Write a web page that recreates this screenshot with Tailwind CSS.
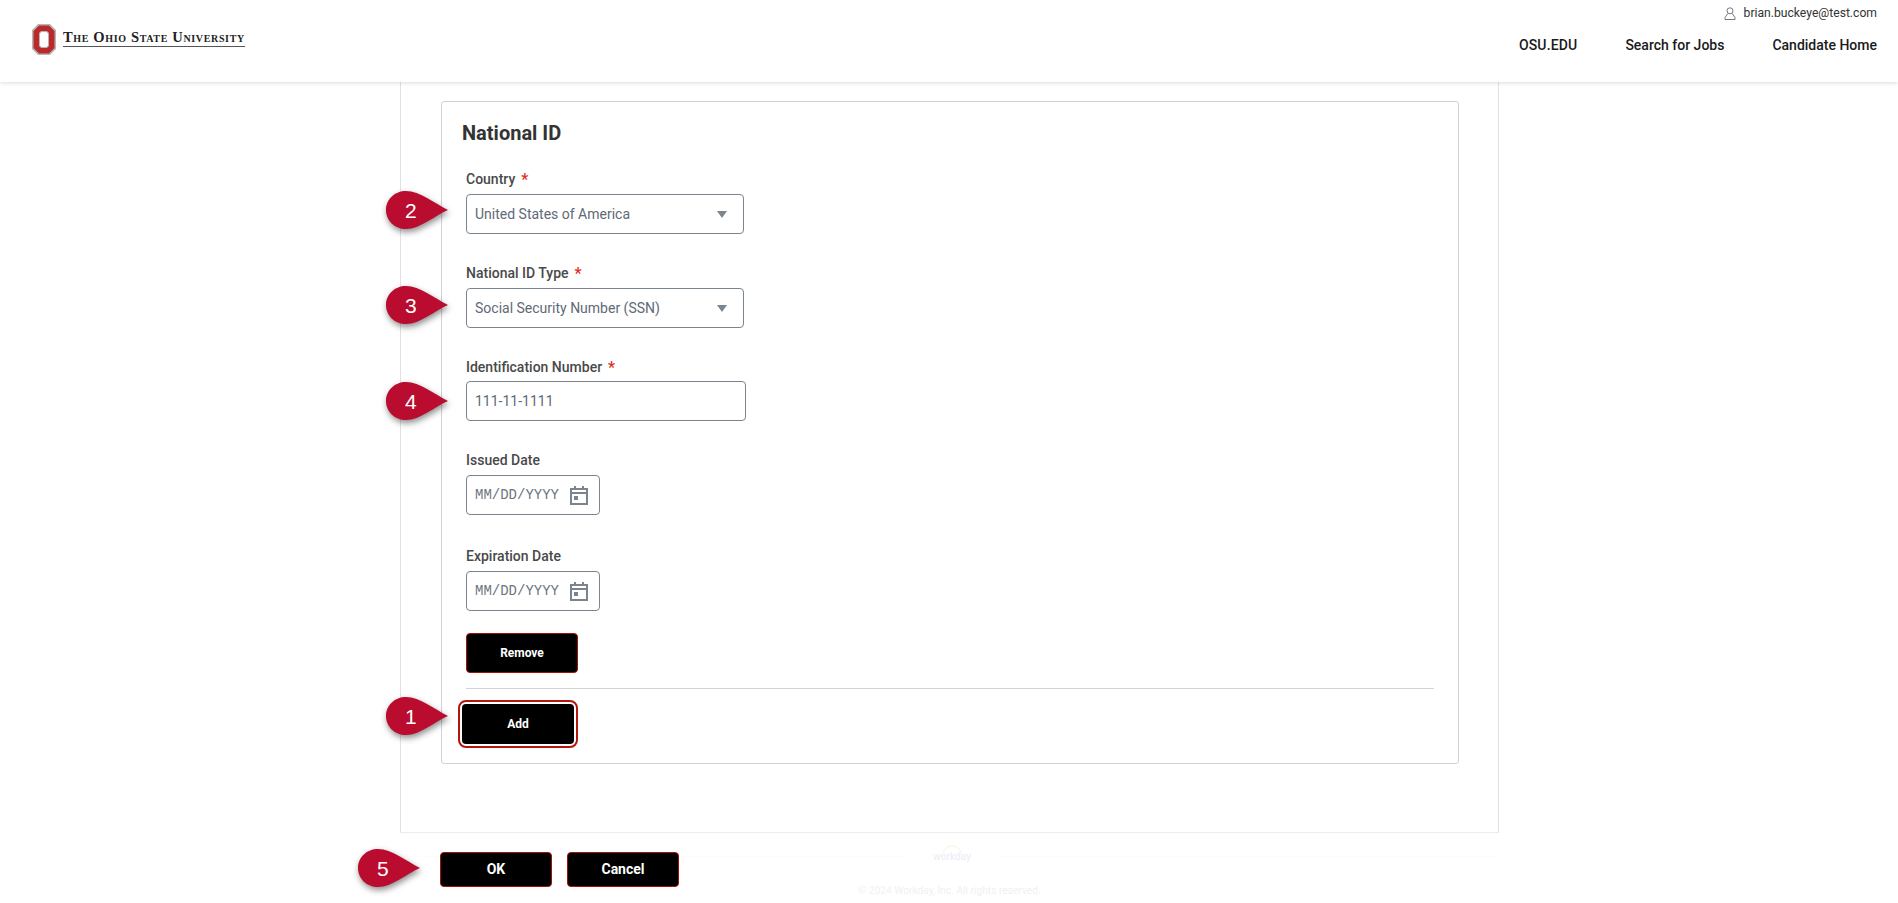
<!DOCTYPE html>
<html lang="en">

<head>
    <meta charset="UTF-8">
    <meta name="viewport" content="width=device-width, initial-scale=1">
    <title>National ID</title>
    <script src="https://cdn.jsdelivr.net/npm/@tailwindcss/browser@4"></script>
</head>

<body class="bg-white text-[#333] font-['Roboto',sans-serif] h-[903px] overflow-hidden">

    <!-- Header -->
    <header class="h-[82px] bg-white flex justify-between shadow-[0_1px_4px_rgba(0,0,0,0.14)] relative z-10">
        <div class="flex items-start pl-[32px] pt-[24px]">
            <svg width="24" height="31" viewBox="0 0 24 31">
                <path d="M6 0H18L24 6V25L18 31H6L0 25V6Z" fill="#b5b5b5" />
                <path d="M7 1.5H17L22.5 7V24L17 29.5H7L1.5 24V7Z" fill="#bb2a2a" />
                <path d="M9 7H15L17 9V22L15 24H9L7 22V9Z" fill="#b5b5b5" />
                <path d="M9.5 8H14.5L16 9.5V21.5L14.5 23H9.5L8 21.5V9.5Z" fill="#fff" />
            </svg>
            <div class="ml-[7px] mt-[3px] w-[182px] border-b border-[#555] h-[20px] font-['Liberation_Serif',serif] font-bold text-[14.5px] leading-[20px] [font-variant:small-caps] text-[#222] whitespace-nowrap tracking-[0.65px]">
                The Ohio State University</div>
        </div>
        <div class="flex flex-col items-end pr-[21px]">
            <div class="flex items-center h-[13px] mt-[7px] text-[12.15px] text-[#333]">
                <svg class="mr-[8px]" width="12" height="13" viewBox="0 0 12 13" fill="none" stroke="#777" stroke-width="1">
                    <circle cx="6" cy="3.8" r="3" />
                    <path d="M3.8 6.5 1 10.5V12.5H11V10.5L8.2 6.5" />
                </svg>
                brian.buckeye@test.com
            </div>
            <nav class="flex gap-[48px] mt-[15px] text-[14px] font-medium leading-[20px] text-[#1a1a1a]">
                <span class="tracking-[0.15px]">OSU.EDU</span>
                <span>Search for Jobs</span>
                <span>Candidate Home</span>
            </nav>
        </div>
    </header>

    <!-- Main column -->
    <main class="ml-[400px] w-[1099px] h-[751px] border-x border-b border-x-[#e2e2e2] border-b-[#ececec] pt-[19px] pl-[40px]">
        <section class="w-[1018px] h-[663px] border border-[#cfd2d8] rounded-[3px] pt-[17px] pl-[20px] text-[#494949]">
            <h2 class="text-[20px] leading-[28px] font-bold text-[#333]">National ID</h2>

            <div class="ml-[4px]">
                <label class="flex h-[20px] mt-[22px] text-[14px] font-medium leading-[20px]">Country<span class="ml-[6px] text-[16px] leading-[22px] text-[#de2e21]">*</span></label>
                <div class="relative mt-[5px] w-[278px] h-[40px] border border-[#7b858f] rounded-[4px] flex items-center justify-between pl-[8px] pr-[16px] text-[14px] text-[#5e6a75]">
                    United States of America
                    <svg width="10" height="7" viewBox="0 0 10 7"><path d="M0 0H10L5 7Z" fill="#7b858f" /></svg>
                    <div class="absolute left-[-81px] top-[-4px] w-[62px] h-[38px]">
                        <svg class="drop-shadow-[1px_3px_3px_rgba(0,0,0,0.45)]" width="62" height="38" viewBox="0 0 62 38"><path d="M0 19C0 8 9 0 20 0C34 0 48 12 62 19C48 25 34 38 20 38C9 38 0 30 0 19Z" fill="#ba0c2f" /></svg>
                        <span class="absolute left-[19px] top-[8px] font-['Liberation_Sans',sans-serif] text-[21px] leading-[24px] text-white">2</span>
                    </div>
                </div>

                <label class="flex h-[20px] mt-[29px] text-[14px] font-medium leading-[20px]">National ID Type<span class="ml-[6px] text-[16px] leading-[22px] text-[#de2e21]">*</span></label>
                <div class="relative mt-[5px] w-[278px] h-[40px] border border-[#7b858f] rounded-[4px] flex items-center justify-between pl-[8px] pr-[16px] text-[14px] text-[#5e6a75]">
                    Social Security Number (SSN)
                    <svg width="10" height="7" viewBox="0 0 10 7"><path d="M0 0H10L5 7Z" fill="#7b858f" /></svg>
                    <div class="absolute left-[-81px] top-[-3px] w-[62px] h-[38px]">
                        <svg class="drop-shadow-[1px_3px_3px_rgba(0,0,0,0.45)]" width="62" height="38" viewBox="0 0 62 38"><path d="M0 19C0 8 9 0 20 0C34 0 48 12 62 19C48 25 34 38 20 38C9 38 0 30 0 19Z" fill="#ba0c2f" /></svg>
                        <span class="absolute left-[19px] top-[8px] font-['Liberation_Sans',sans-serif] text-[21px] leading-[24px] text-white">3</span>
                    </div>
                </div>

                <label class="flex h-[20px] mt-[29px] text-[14px] font-medium leading-[20px]">Identification Number<span class="ml-[6px] text-[16px] leading-[22px] text-[#de2e21]">*</span></label>
                <div class="relative mt-[4px] w-[280px] h-[40px] border border-[#7b858f] rounded-[4px] flex items-center pl-[8px] text-[14px] text-[#5e6a75]">
                    111-11-1111
                    <div class="absolute left-[-81px] top-[0px] w-[62px] h-[38px]">
                        <svg class="drop-shadow-[1px_3px_3px_rgba(0,0,0,0.45)]" width="62" height="38" viewBox="0 0 62 38"><path d="M0 19C0 8 9 0 20 0C34 0 48 12 62 19C48 25 34 38 20 38C9 38 0 30 0 19Z" fill="#ba0c2f" /></svg>
                        <span class="absolute left-[19px] top-[8px] font-['Liberation_Sans',sans-serif] text-[21px] leading-[24px] text-white">4</span>
                    </div>
                </div>

                <label class="flex h-[20px] mt-[29px] text-[14px] font-medium leading-[20px]">Issued Date</label>
                <div class="mt-[5px] w-[134px] h-[40px] border border-[#7b858f] rounded-[4px] flex items-center pl-[8px] font-['Liberation_Mono',monospace] text-[14px] text-[#6b7580]">
                    MM/DD/YYYY
                    <svg class="ml-[11px]" width="18" height="19" viewBox="0 0 18 19" fill="none" stroke="#7b858f" stroke-width="2">
                        <rect x="1" y="3" width="16" height="15" />
                        <path d="M1 7H17M5 0V3M13 0V3" />
                        <rect x="4" y="10" width="4" height="4" fill="#7b858f" stroke="none" />
                    </svg>
                </div>

                <label class="flex h-[20px] mt-[31px] text-[14px] font-medium leading-[20px]">Expiration Date</label>
                <div class="mt-[5px] w-[134px] h-[40px] border border-[#7b858f] rounded-[4px] flex items-center pl-[8px] font-['Liberation_Mono',monospace] text-[14px] text-[#6b7580]">
                    MM/DD/YYYY
                    <svg class="ml-[11px]" width="18" height="19" viewBox="0 0 18 19" fill="none" stroke="#7b858f" stroke-width="2">
                        <rect x="1" y="3" width="16" height="15" />
                        <path d="M1 7H17M5 0V3M13 0V3" />
                        <rect x="4" y="10" width="4" height="4" fill="#7b858f" stroke="none" />
                    </svg>
                </div>

                <button class="block mt-[22px] w-[112px] h-[40px] bg-black border border-[#a3120a] rounded-[4px] text-white text-[12px] font-bold pb-[1px]">Remove</button>
                <div class="mt-[15px] mr-[24px] border-t border-[#cfd2d8]"></div>
            </div>

            <div class="relative mt-[15px] w-[112px]">
                <button class="block w-[112px] h-[40px] bg-black rounded-[4px] text-white text-[12px] font-bold outline-2 outline-offset-2 outline-[#b0180f]">Add</button>
                <div class="absolute left-[-76px] top-[-7px] w-[62px] h-[40px]">
                    <svg class="drop-shadow-[1px_3px_3px_rgba(0,0,0,0.45)]" width="62" height="38" viewBox="0 0 62 38"><path d="M0 19C0 8 9 0 20 0C34 0 48 12 62 19C48 25 34 38 20 38C9 38 0 30 0 19Z" fill="#ba0c2f" /></svg>
                    <span class="absolute left-[19px] top-[8px] font-['Liberation_Sans',sans-serif] text-[21px] leading-[24px] text-white">1</span>
                </div>
            </div>
        </section>
    </main>

    <!-- Footer buttons -->
    <footer class="relative h-[70px] pt-[19px] pl-[440px]">
        <div class="absolute left-[400px] top-[23px] w-[1099px] border-t border-[#fcfcfc]"></div>
        <div class="absolute left-[904px] top-[12px] w-[96px] h-[20px] bg-white flex flex-col items-center">
            <svg width="20" height="8" viewBox="0 0 20 8" fill="none" stroke="#fbf3dc" stroke-width="1"><path d="M1 8C3 2 7 1 10 1C13 1 17 2 19 8" /></svg>
            <span class="text-[10px] leading-[12px] text-[#e9edf6] -mt-[2px]">workday</span>
        </div>
        <div class="absolute left-[400px] top-[51px] w-[1099px] text-center text-[10.2px] leading-[14px] text-[#f1f1f1]">© 2024 Workday, Inc. All rights reserved.</div>

        <div class="relative flex gap-[15px]">
            <div class="relative">
                <button class="block w-[112px] h-[35px] bg-black border border-[#a3120a] rounded-[4px] text-white text-[14px] font-bold">OK</button>
                <div class="absolute left-[-82px] top-[-3px] w-[62px] h-[38px]">
                    <svg class="drop-shadow-[1px_3px_3px_rgba(0,0,0,0.45)]" width="62" height="38" viewBox="0 0 62 38"><path d="M0 19C0 8 9 0 20 0C34 0 48 12 62 19C48 25 34 38 20 38C9 38 0 30 0 19Z" fill="#ba0c2f" /></svg>
                    <span class="absolute left-[19px] top-[8px] font-['Liberation_Sans',sans-serif] text-[21px] leading-[24px] text-white">5</span>
                </div>
            </div>
            <button class="block w-[112px] h-[35px] bg-black border border-[#a3120a] rounded-[4px] text-white text-[14px] font-bold">Cancel</button>
        </div>
    </footer>

</body>

</html>
